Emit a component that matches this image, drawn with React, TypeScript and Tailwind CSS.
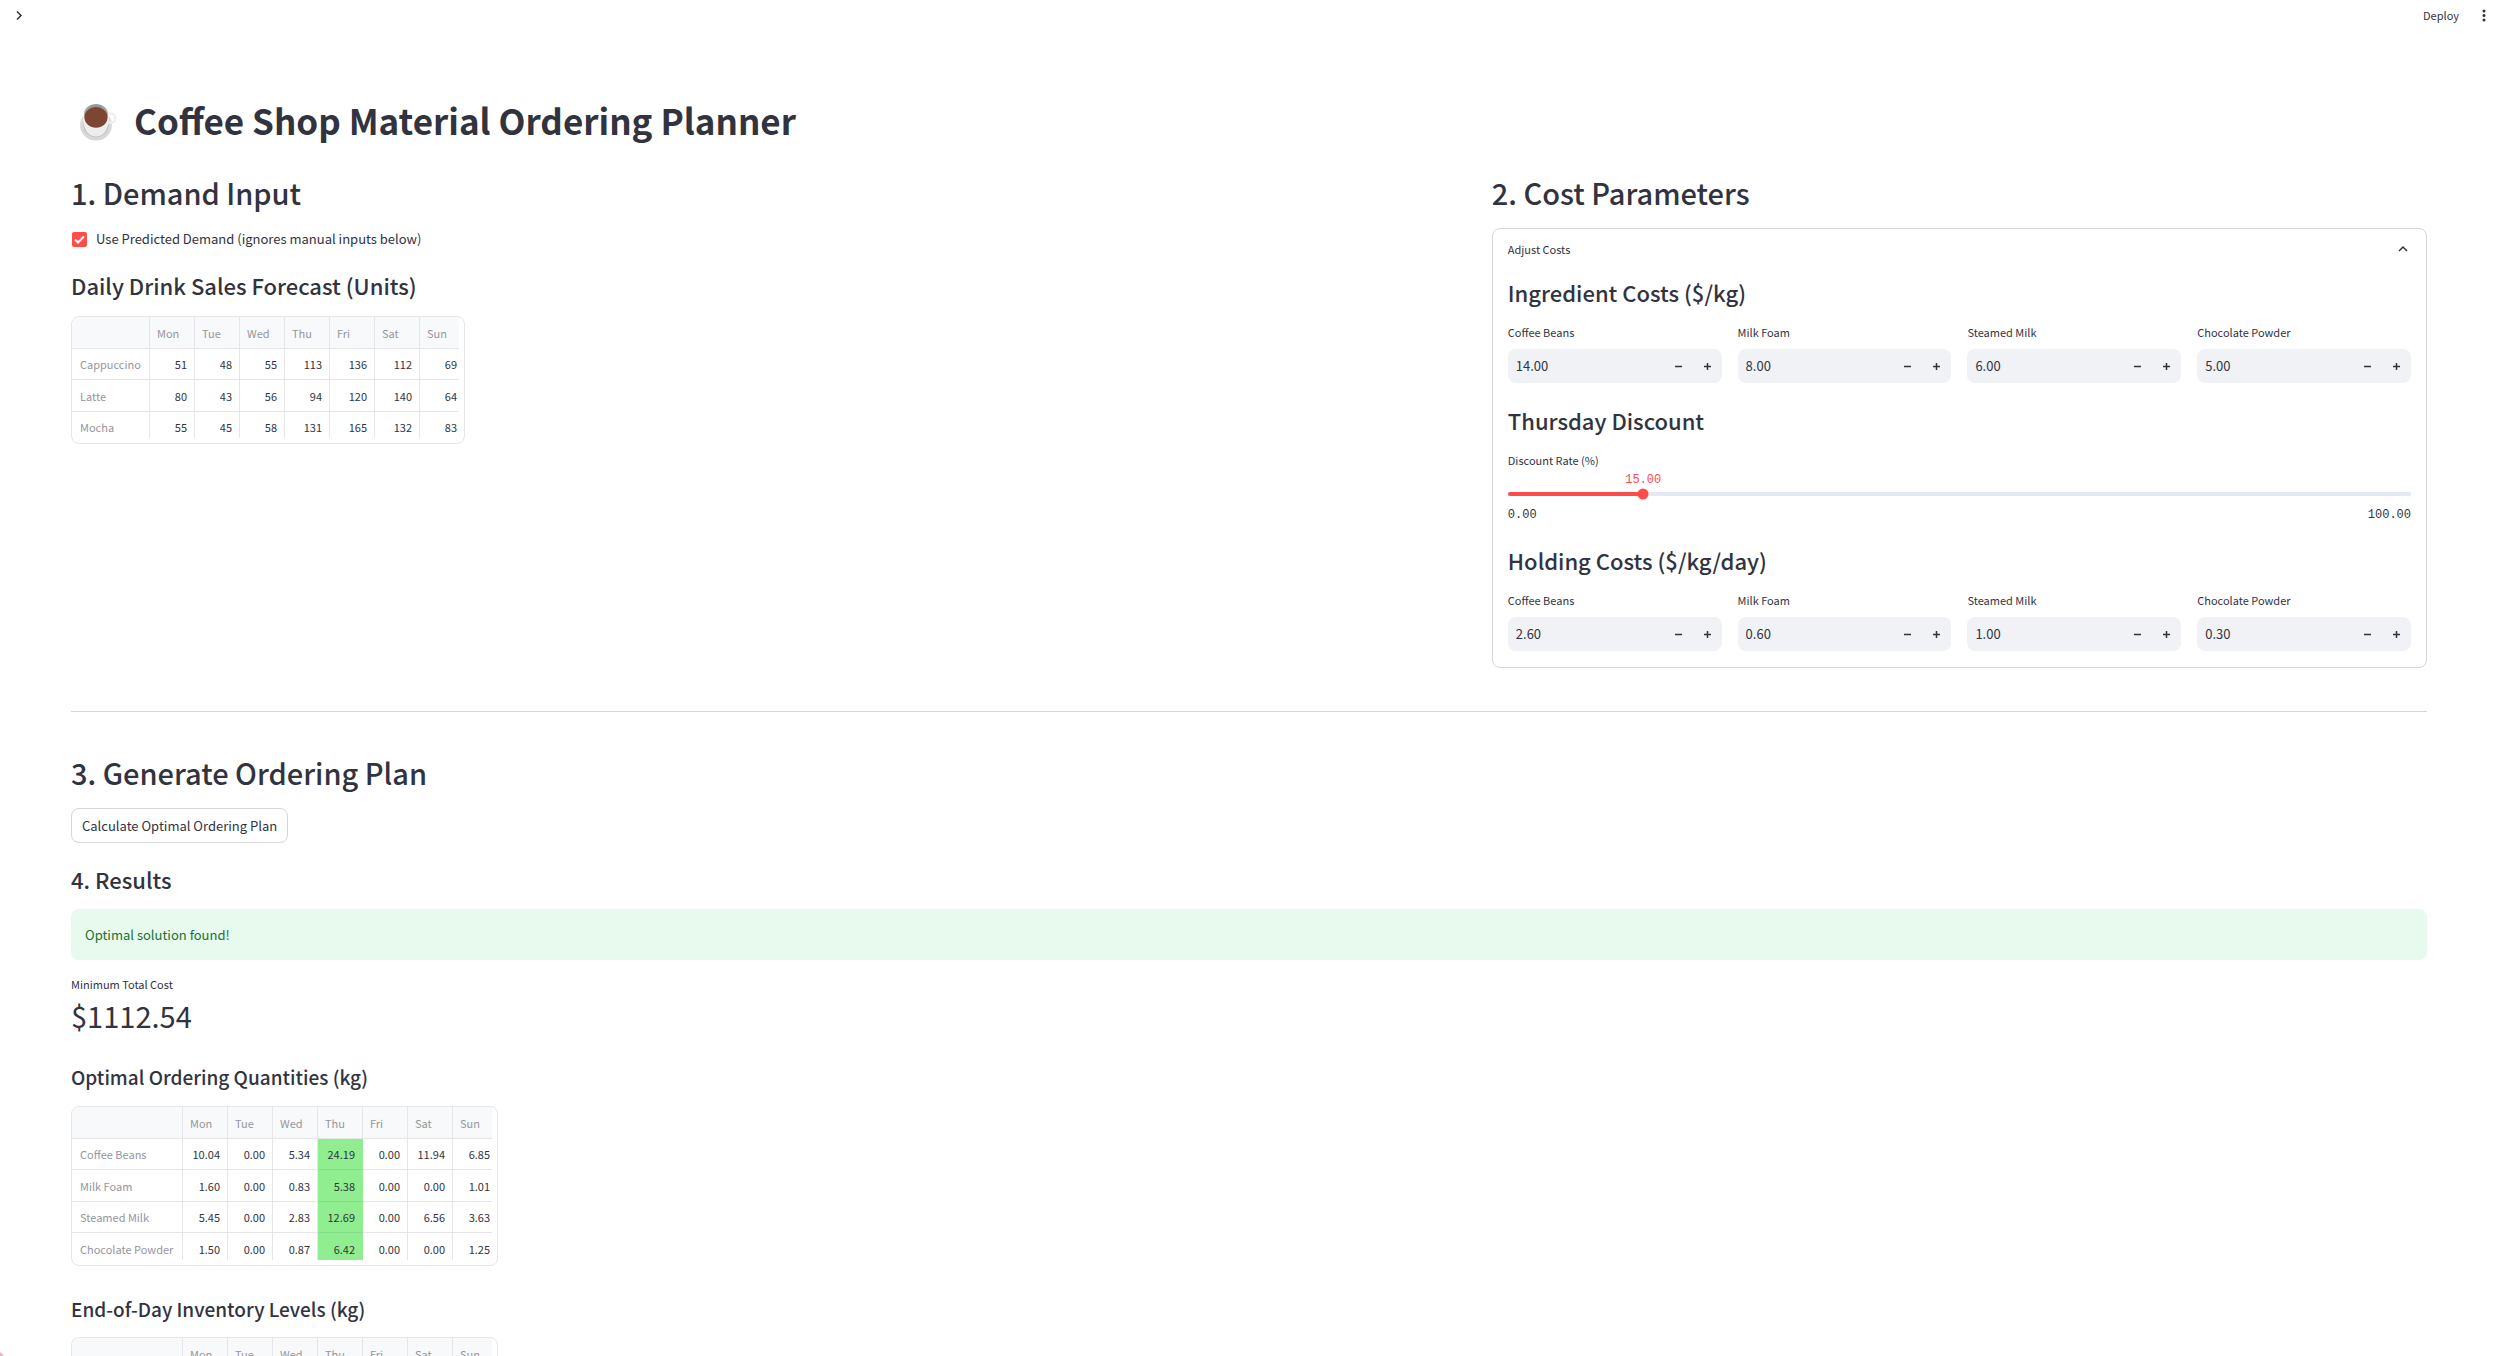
import { useId, useState } from 'react'

const DAYS = ['Mon', 'Tue', 'Wed', 'Thu', 'Fri', 'Sat', 'Sun']

type Row = { name: string; values: string[] }

const FORECAST: Row[] = [
  { name: 'Cappuccino', values: ['51', '48', '55', '113', '136', '112', '69'] },
  { name: 'Latte', values: ['80', '43', '56', '94', '120', '140', '64'] },
  { name: 'Mocha', values: ['55', '45', '58', '131', '165', '132', '83'] },
]

const ORDERS: Row[] = [
  { name: 'Coffee Beans', values: ['10.04', '0.00', '5.34', '24.19', '0.00', '11.94', '6.85'] },
  { name: 'Milk Foam', values: ['1.60', '0.00', '0.83', '5.38', '0.00', '0.00', '1.01'] },
  { name: 'Steamed Milk', values: ['5.45', '0.00', '2.83', '12.69', '0.00', '6.56', '3.63'] },
  { name: 'Chocolate Powder', values: ['1.50', '0.00', '0.87', '6.42', '0.00', '0.00', '1.25'] },
]

const INGREDIENT_COSTS = [
  ['Coffee Beans', '14.00'],
  ['Milk Foam', '8.00'],
  ['Steamed Milk', '6.00'],
  ['Chocolate Powder', '5.00'],
]

const HOLDING_COSTS = [
  ['Coffee Beans', '2.60'],
  ['Milk Foam', '0.60'],
  ['Steamed Milk', '1.00'],
  ['Chocolate Powder', '0.30'],
]

function CoffeeCup() {
  return (
    <svg className="h-11 w-10 shrink-0" viewBox="0 -4 40 44" aria-hidden="true">
      <defs>
        <linearGradient id="saucer" x1="0" y1="0" x2="0" y2="1">
          <stop offset="0" stopColor="#e0e0e0" />
          <stop offset="1" stopColor="#d6d6d6" />
        </linearGradient>
        <linearGradient id="body" x1="0" y1="0" x2="0" y2="1">
          <stop offset="0" stopColor="#f6f6f6" />
          <stop offset="1" stopColor="#ebebeb" />
        </linearGradient>
        <linearGradient id="inside" x1="0" y1="0" x2="0" y2="1">
          <stop offset="0" stopColor="#8f9293" />
          <stop offset="1" stopColor="#d9d9d9" />
        </linearGradient>
      </defs>
      <ellipse cx="17" cy="23" rx="16" ry="15.500" fill="url(#saucer)" />
      <ellipse cx="17" cy="22.800" rx="12.600" ry="12.400" fill="#b8b8b8" />
      <circle cx="31.500" cy="16" r="4.800" fill="none" stroke="#f0f0f0" strokeWidth="2.400" />
      <path d="M4 14C4 7 10 2 17 2S30 7 30 14c0 10-3 20.500-13 20.500S4 24 4 14Z" fill="url(#body)" />
      <ellipse cx="17" cy="12" rx="12" ry="10" fill="url(#inside)" />
      <ellipse cx="17" cy="15.300" rx="11.600" ry="10.400" fill="#7d4534" />
    </svg>
  )
}

function SectionHeading({ children }: { children: string }) {
  return <h2 className="text-[29px] leading-9 font-medium">{children}</h2>
}

function SubHeading({ children }: { children: string }) {
  return <h3 className="text-[22px] leading-8 font-medium">{children}</h3>
}

function MinorHeading({ children }: { children: string }) {
  return <h4 className="text-[19px] leading-7 font-medium">{children}</h4>
}

function DataGrid({ label, rows, wide, highlight }: { label: string; rows: Row[]; wide?: boolean; highlight?: string }) {
  return (
    <div className="w-fit rounded-lg border border-[#e6e6ea] pr-[5px] pb-[5px]">
      <div className="overflow-hidden rounded-tl-lg">
        <table aria-label={label} className="-mr-[6px] -mb-[5px] table-fixed border-separate border-spacing-0 text-[11px] leading-4">
          <colgroup>
            <col className={wide ? 'w-[111px]' : 'w-[78px]'} />
            {DAYS.map((d) => (
              <col key={d} className="w-[45px]" />
            ))}
          </colgroup>
          <thead>
            <tr className="h-8 bg-[#f8f9fb] text-left text-[#95969d]">
              <td className="border-r border-b border-[#e6e6ea]" />
              {DAYS.map((d) => (
                <th key={d} scope="col" className="border-r border-b border-[#e6e6ea] pl-[7px] font-normal">
                  {d}
                </th>
              ))}
            </tr>
          </thead>
          <tbody>
            {rows.map((r) => (
              <tr key={r.name} className="h-8 odd:h-[31px]">
                <th scope="row" className="border-r border-b border-[#e6e6ea] pl-2 text-left font-normal whitespace-nowrap text-[#95969d]">
                  {r.name}
                </th>
                {r.values.map((v, i) => (
                  <td
                    key={DAYS[i]}
                    className={
                      DAYS[i] === highlight
                        ? 'border-r border-b border-r-[#90ee90] border-b-[#86dd88] bg-[#90ee90] pr-[7px] text-right'
                        : 'border-r border-b border-[#e6e6ea] pr-[7px] text-right'
                    }
                  >
                    {v}
                  </td>
                ))}
              </tr>
            ))}
          </tbody>
        </table>
      </div>
    </div>
  )
}

function NumberField({ label, initial }: { label: string; initial: string }) {
  const id = useId()
  const [value, setValue] = useState(initial)
  const step = (d: number) => setValue((v) => Math.max(0, Number(v) + d).toFixed(2))
  return (
    <div className="min-w-0">
      <label htmlFor={id} className="block text-[11px] leading-5">
        {label}
      </label>
      <div className="mt-[7px] flex h-[34px] overflow-hidden rounded-lg bg-[#f0f2f6]">
        <input
          id={id}
          inputMode="decimal"
          value={value}
          onChange={(e) => setValue(e.target.value)}
          className="min-w-0 flex-1 bg-transparent pl-2 text-[13px] leading-5 outline-none"
        />
        <button type="button" aria-label={`Decrease ${label}`} onClick={() => step(-0.1)} className="flex w-[29px] items-center justify-center">
          <svg className="h-[9px] w-[9px]" viewBox="0 0 9 9" aria-hidden="true">
            <path d="M1 4.500h7" stroke="#31333f" strokeWidth="1.500" />
          </svg>
        </button>
        <button type="button" aria-label={`Increase ${label}`} onClick={() => step(0.1)} className="flex w-[29px] items-center justify-center">
          <svg className="h-[9px] w-[9px]" viewBox="0 0 9 9" aria-hidden="true">
            <path d="M1 4.500h7M4.500 1v7" stroke="#31333f" strokeWidth="1.500" />
          </svg>
        </button>
      </div>
    </div>
  )
}

function FieldRow({ fields }: { fields: string[][] }) {
  return (
    <div className="grid grid-cols-4 gap-4">
      {fields.map(([label, value]) => (
        <NumberField key={label} label={label} initial={value} />
      ))}
    </div>
  )
}

function DiscountSlider() {
  const id = useId()
  const [rate, setRate] = useState(15)
  return (
    <div>
      <label htmlFor={id} className="block text-[11px] leading-5">
        Discount Rate (%)
      </label>
      <div className="relative mt-[22px] h-1 rounded-full bg-[#e4e8f0]">
        <div className="h-1 rounded-full bg-[#ff4b4b]" style={{ width: `${rate}%` }} />
        <div className="absolute top-1/2 h-[11px] w-[11px] -translate-x-1/2 -translate-y-1/2 rounded-full bg-[#ff4b4b]" style={{ left: `${rate}%` }} />
        <output
          htmlFor={id}
          className="absolute bottom-2 -translate-x-1/2 font-['Liberation_Mono',monospace] text-xs leading-4 text-[#ff4b4b]"
          style={{ left: `${rate}%` }}
        >
          {rate.toFixed(2)}
        </output>
        <input
          id={id}
          type="range"
          min={0}
          max={100}
          value={rate}
          onChange={(e) => setRate(Number(e.target.value))}
          className="absolute -top-1.5 left-0 h-4 w-full cursor-pointer opacity-0"
        />
      </div>
      <div className="mt-[11px] flex justify-between font-['Liberation_Mono',monospace] text-xs leading-4">
        <span>0.00</span>
        <span>100.00</span>
      </div>
    </div>
  )
}

export default function App() {
  const [predicted, setPredicted] = useState(true)
  return (
    <div className="relative h-screen overflow-hidden bg-white font-['Noto_Sans_CJK_SC',sans-serif] text-[13px] leading-5 text-[#31333f]">
      <header className="flex h-[30px] items-center justify-between pr-[5px] pl-3">
        <button type="button" aria-label="Open sidebar" className="flex h-4 w-4 items-center justify-center">
          <svg className="h-4 w-4" viewBox="0 0 16 16" fill="none" aria-hidden="true">
            <path d="M5 4.500l4 4-4 4" stroke="#31333f" strokeWidth="1.500" />
          </svg>
        </button>
        <div className="flex items-center gap-[21px]">
          <button type="button" className="text-[11px] leading-5">
            Deploy
          </button>
          <button type="button" aria-label="Main menu">
            <svg className="h-4 w-2" viewBox="0 0 8 16" fill="#31333f" aria-hidden="true">
              <circle cx="4" cy="4" r="1.500" />
              <circle cx="4" cy="8.500" r="1.500" />
              <circle cx="4" cy="13" r="1.500" />
            </svg>
          </button>
        </div>
      </header>

      <main className="pt-[66px] pr-[66px] pl-[71px]">
        <h1 className="flex h-12 items-center gap-[15px] pl-2 text-[35px] leading-[48px] font-bold">
          <CoffeeCup />
          Coffee Shop Material Ordering Planner
        </h1>

        <div className="mt-[30px] grid grid-cols-[3fr_2fr] gap-[18px]">
          <section>
            <SectionHeading>1. Demand Input</SectionHeading>
            <label className="mt-[19px] flex items-center gap-[9px] pl-px">
              <input
                type="checkbox"
                checked={predicted}
                onChange={(e) => setPredicted(e.target.checked)}
                className="peer sr-only"
              />
              <svg className="h-[15px] w-[15px] rounded-[2px] bg-[#d5d6d8] peer-checked:bg-[#ff4b4b]" viewBox="0 0 15 15" fill="none" aria-hidden="true">
                <path d="M3 7.500l3 3 6-6" stroke="#fff" strokeWidth="2" />
              </svg>
              Use Predicted Demand (ignores manual inputs below)
            </label>
            <div className="mt-5">
              <SubHeading>Daily Drink Sales Forecast (Units)</SubHeading>
            </div>
            <div className="mt-[15px]">
              <DataGrid label="Daily drink sales forecast" rows={FORECAST} />
            </div>
          </section>

          <section>
            <SectionHeading>2. Cost Parameters</SectionHeading>
            <div className="mt-[18px] rounded-lg border border-[#d6d6d9] px-[15px] pb-4">
              <button type="button" aria-expanded="true" className="flex h-10 w-full items-center justify-between text-[11px] leading-5">
                Adjust Costs
                <svg className="h-4 w-4" viewBox="0 0 16 16" fill="none" aria-hidden="true">
                  <path d="M4 10l4-4 4 4" stroke="#31333f" strokeWidth="1.500" />
                </svg>
              </button>
              <div className="mt-[7px]">
                <SubHeading>Ingredient Costs ($/kg)</SubHeading>
              </div>
              <div className="mt-3.5">
                <FieldRow fields={INGREDIENT_COSTS} />
              </div>
              <div className="mt-[21px]">
                <SubHeading>Thursday Discount</SubHeading>
              </div>
              <div className="mt-3.5">
                <DiscountSlider />
              </div>
              <div className="mt-[21px]">
                <SubHeading>Holding Costs ($/kg/day)</SubHeading>
              </div>
              <div className="mt-3.5">
                <FieldRow fields={HOLDING_COSTS} />
              </div>
            </div>
          </section>
        </div>

        <hr className="mt-[43px] border-[#d6d6d9]" />

        <section className="mt-[42px]">
          <SectionHeading>3. Generate Ordering Plan</SectionHeading>
          <button type="button" className="mt-[18px] block h-[35px] rounded-lg border border-[#d6d6d9] px-2.5">
            Calculate Optimal Ordering Plan
          </button>
          <div className="mt-5">
            <SubHeading>4. Results</SubHeading>
          </div>
          <div role="status" className="mt-3.5 flex h-[51px] items-center rounded-lg bg-[#e8f9ee] px-3.5 text-[#177233]">
            Optimal solution found!
          </div>
          <p className="mt-3.5 text-[11px] leading-5">Minimum Total Cost</p>
          <p className="text-[29px] leading-[42px]">$1112.54</p>
          <div className="mt-[27px]">
            <MinorHeading>Optimal Ordering Quantities (kg)</MinorHeading>
          </div>
          <div className="mt-[15px]">
            <DataGrid label="Optimal ordering quantities" rows={ORDERS} wide highlight="Thu" />
          </div>
          <div className="mt-[29px]">
            <MinorHeading>End-of-Day Inventory Levels (kg)</MinorHeading>
          </div>
          <div className="mt-3.5">
            <DataGrid label="End-of-day inventory levels" rows={[]} wide />
          </div>
        </section>
      </main>

      <div className="absolute -bottom-2 -left-2 h-3 w-3 rounded-full bg-[#f3b3c1]" aria-hidden="true" />
    </div>
  )
}
